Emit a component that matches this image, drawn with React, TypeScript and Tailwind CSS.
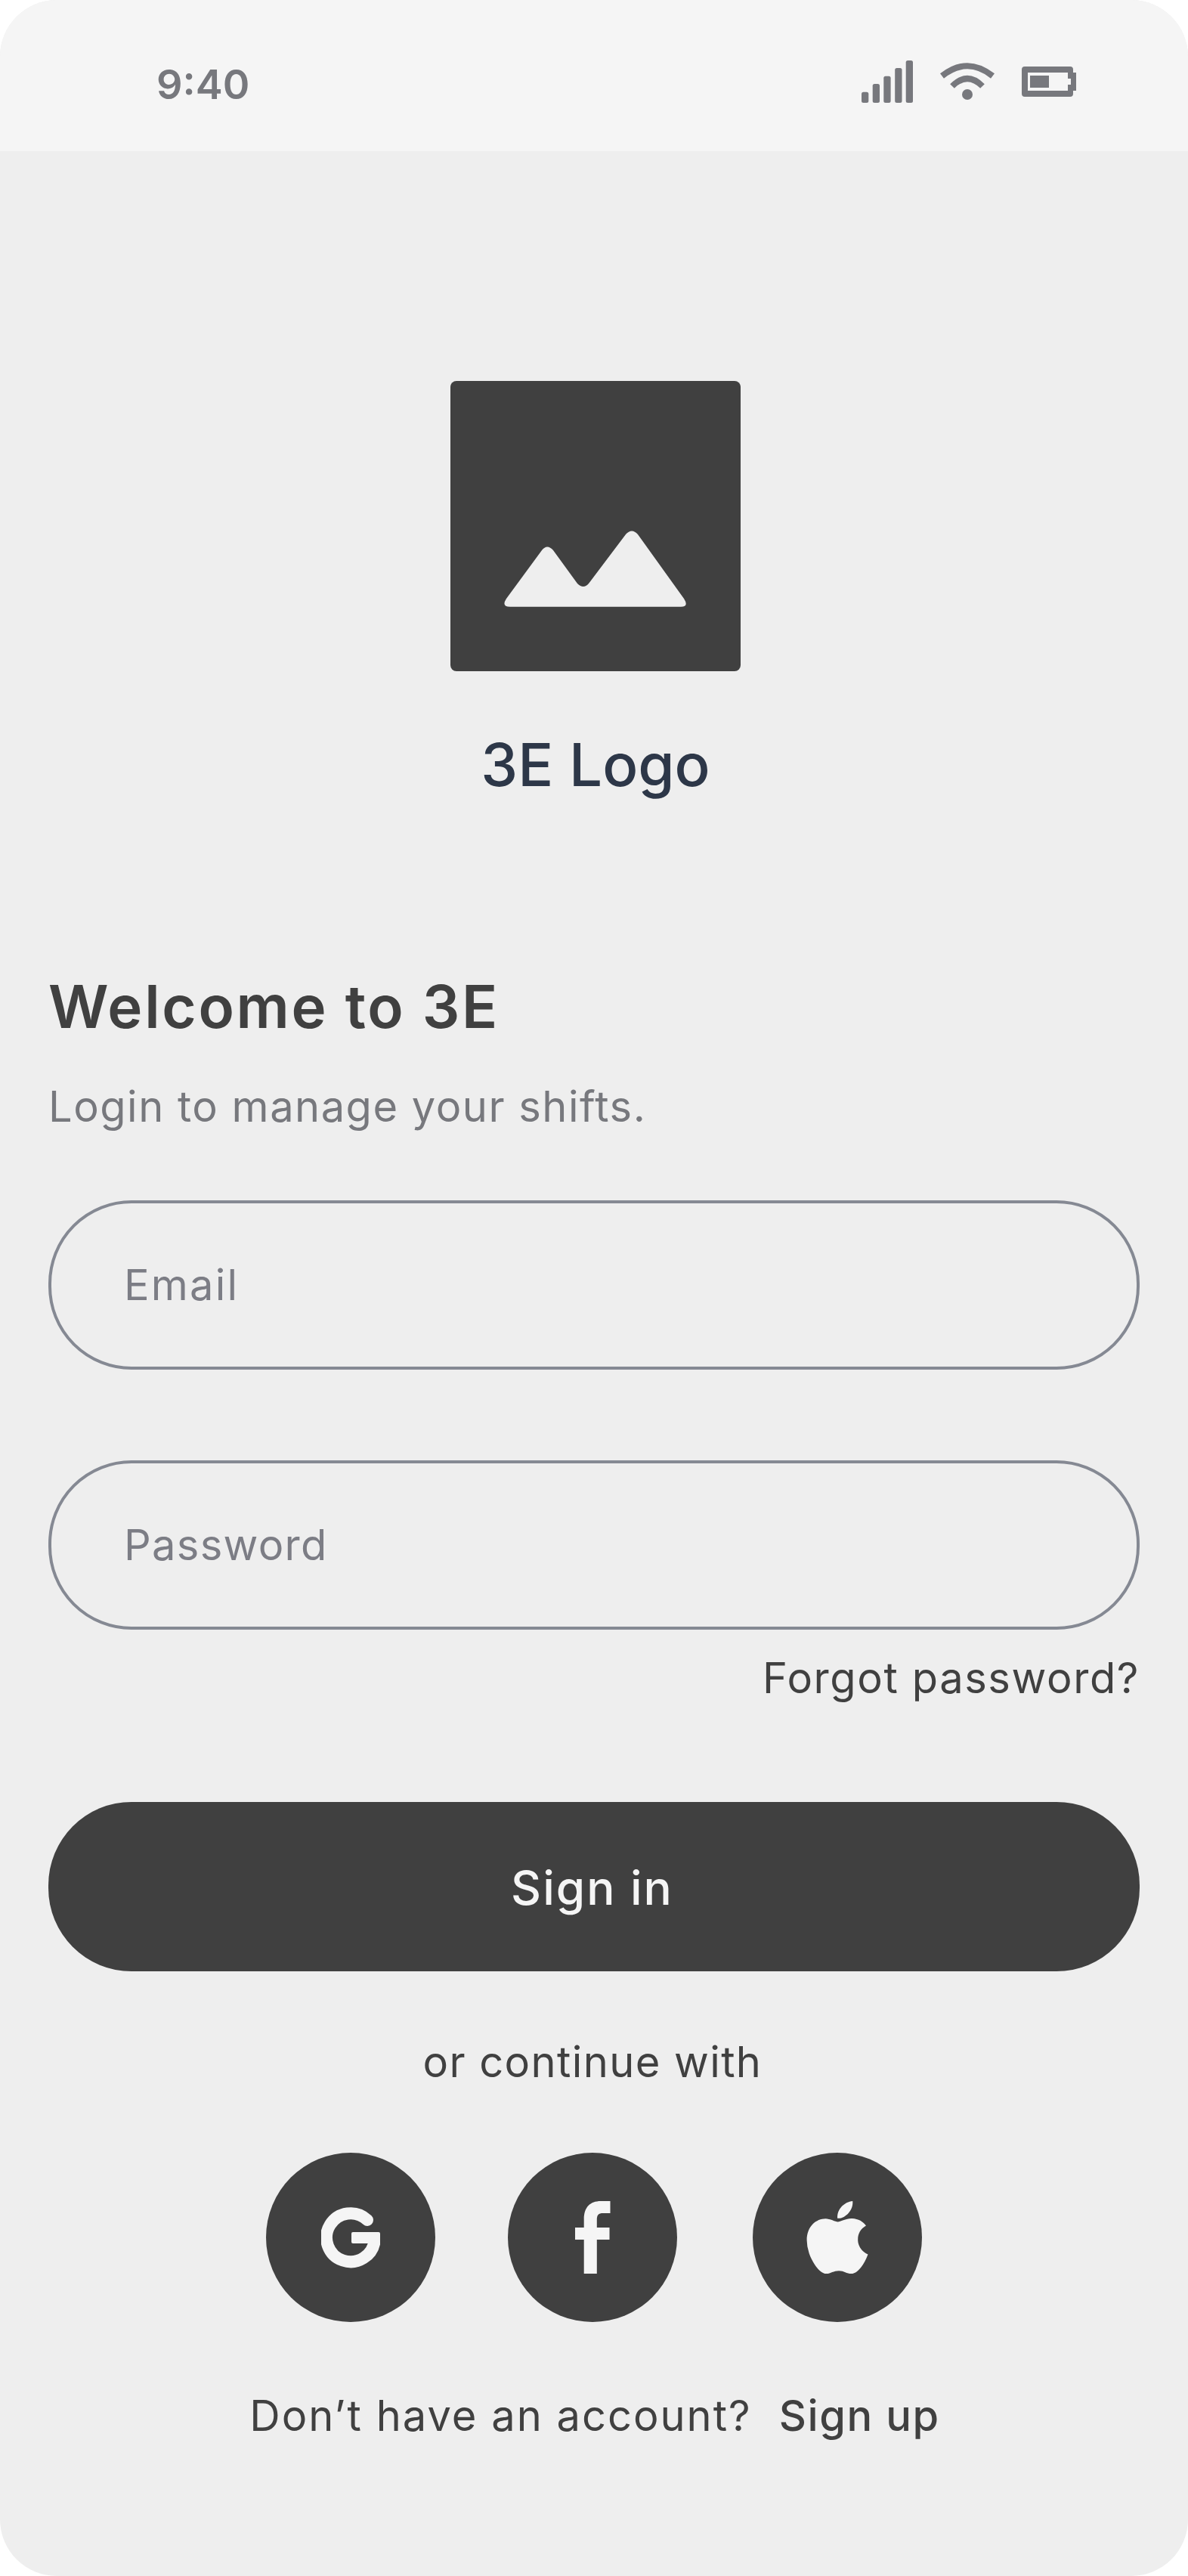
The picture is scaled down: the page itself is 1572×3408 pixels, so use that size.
import { FaApple } from "react-icons/fa";

const font = "font-['Inter','Noto_Sans',sans-serif]";

function SignalIcon() {
  return (
    <svg width="68" height="56" viewBox="0 0 68 56" className="fill-[#77787d]">
      <rect x="0" y="41.7" width="9.3" height="14.3" rx="2.5" />
      <rect x="14.7" y="31" width="9.3" height="25" rx="2.5" />
      <rect x="29.3" y="20.7" width="9.3" height="35.3" rx="2.5" />
      <rect x="44.2" y="10" width="9.3" height="46" rx="2.5" />
      <rect x="58.7" y="0" width="9.3" height="56" rx="2.5" />
    </svg>
  );
}

function WifiIcon() {
  return (
    <svg width="72" height="52" viewBox="144 82 72 52" className="fill-none stroke-[#77787d]">
      <path d="M146.5 100.5Q180 74 213.5 100.5" strokeWidth="8" />
      <path d="M160 114Q180 94 200 114" strokeWidth="8" />
      <circle cx="180" cy="125" r="7" className="fill-[#77787d] stroke-none" />
    </svg>
  );
}

function BatteryIcon() {
  return (
    <svg width="73" height="40" viewBox="252 88 73 40" className="fill-[#77787d]">
      <path
        fillRule="evenodd"
        d="M256 88H316a4 4 0 0 1 4 4V96H324V120H320V124a4 4 0 0 1-4 4H256a4 4 0 0 1-4-4V92a4 4 0 0 1 4-4ZM260 96V120H313V96Z"
      />
      <rect x="263" y="100" width="25" height="16" />
      <rect x="313" y="104" width="4" height="8" className="fill-[#f5f5f5]" />
    </svg>
  );
}

function LogoMark() {
  return (
    <svg width="384" height="384" viewBox="0 0 384 384">
      <path
        d="M79 298.7Q67 298.7 74 288L121 224Q128 215 136 224L168 268Q176 276 183 268L232 203Q240 194 248 203L309 288Q316 298.7 305 298.7Z"
        fill="#eeeeee"
      />
    </svg>
  );
}

function GoogleMark() {
  return (
    <svg width="78" height="81" viewBox="0 0 78 81" fill="none">
      <path d="M61 17A32 32 0 1 0 70.8 44" stroke="#f5f5f5" strokeWidth="16" strokeLinecap="round" />
      <rect x="40" y="33" width="38" height="15" rx="2" fill="#f5f5f5" />
    </svg>
  );
}

function FacebookMark() {
  return (
    <svg width="47" height="96" viewBox="0 0 47 96">
      <path
        d="M11.7 96V51H0V35H11.7V24C11.7 8 20 0 34 0H46.5V16H37C31 16 28.8 18 28.8 25V35H45.5V51H28.8V96Z"
        fill="#f5f5f5"
      />
    </svg>
  );
}

function SocialButton({ children, className = "" }: { children: React.ReactNode; className?: string }) {
  return (
    <button className={`flex h-[224px] w-[224px] items-center justify-center rounded-full bg-[#404040] ${className}`}>
      {children}
    </button>
  );
}

export default function App() {
  return (
    <div className={`flex h-[3408px] w-[1572px] flex-col overflow-hidden rounded-[75px] bg-[#eeeeee] ${font}`}>
      <header className="flex h-[200px] shrink-0 items-start justify-between bg-[#f5f5f5] pl-[207px] pr-[147px] pt-[78px]">
        <span className="text-[54px] font-semibold leading-[68px] text-[#77787d]">9:40</span>
        <div className="mt-[2px] flex h-[56px] items-center gap-[36px]">
          <SignalIcon />
          <WifiIcon />
          <BatteryIcon />
        </div>
      </header>

      <main className="flex flex-1 flex-col px-[64px]">
        <div className="flex flex-col items-center pl-[4px] pt-[304px]">
          <div className="rounded-[8px] bg-[#404040]">
            <LogoMark />
          </div>
          <p className="mt-[76px] text-[78px] font-medium leading-[96px] text-[#2d3748]">3E Logo</p>
        </div>

        <h1 className="mt-[222px] text-[78px] font-semibold leading-[100px] tracking-[2.7px] text-[#404040]">
          Welcome to 3E
        </h1>
        <p className="mt-[42px] text-[56px] leading-[80px] tracking-[1.5px] text-[#77787d]">
          Login to manage your shifts.
        </p>

        <input
          placeholder="Email"
          className="mt-[84px] h-[224px] w-full rounded-[110px] border-4 border-[#858993] bg-transparent pl-[96px] text-[56px] tracking-[2.2px] placeholder:text-[#7c7d85]"
        />
        <input
          placeholder="Password"
          className="mt-[120px] h-[224px] w-full rounded-[110px] border-4 border-[#858993] bg-transparent pl-[96px] text-[56px] tracking-[1.3px] placeholder:text-[#7c7d85]"
        />
        <a className="mt-[24px] self-end text-[56px] leading-[80px] tracking-[1.6px] text-[#404040]">Forgot password?</a>

        <button className="mt-[124px] h-[224px] w-full rounded-[110px] bg-[#404040] pr-[5px] pt-[2px] text-[62px] font-medium tracking-[2px] text-[#f5f5f5]">
          Sign in
        </button>

        <p className="mt-[80px] pr-[4px] text-center text-[56px] leading-[80px] tracking-[1.4px] text-[#404040]">
          or continue with
        </p>

        <div className="mt-[80px] flex justify-center gap-[96px]">
          <SocialButton>
            <GoogleMark />
          </SocialButton>
          <SocialButton>
            <FacebookMark />
          </SocialButton>
          <SocialButton className="ml-[4px]">
            <FaApple className="text-[110px] text-[#f5f5f5]" />
          </SocialButton>
        </div>

        <p className="mt-[84px] flex items-center justify-center gap-[36px] pl-[2px] text-[56px] leading-[80px] text-[#404040]">
          <span className="tracking-[2px]">Don’t have an account?</span>
          <a className="font-medium tracking-[1.6px]">Sign up</a>
        </p>
      </main>
    </div>
  );
}
